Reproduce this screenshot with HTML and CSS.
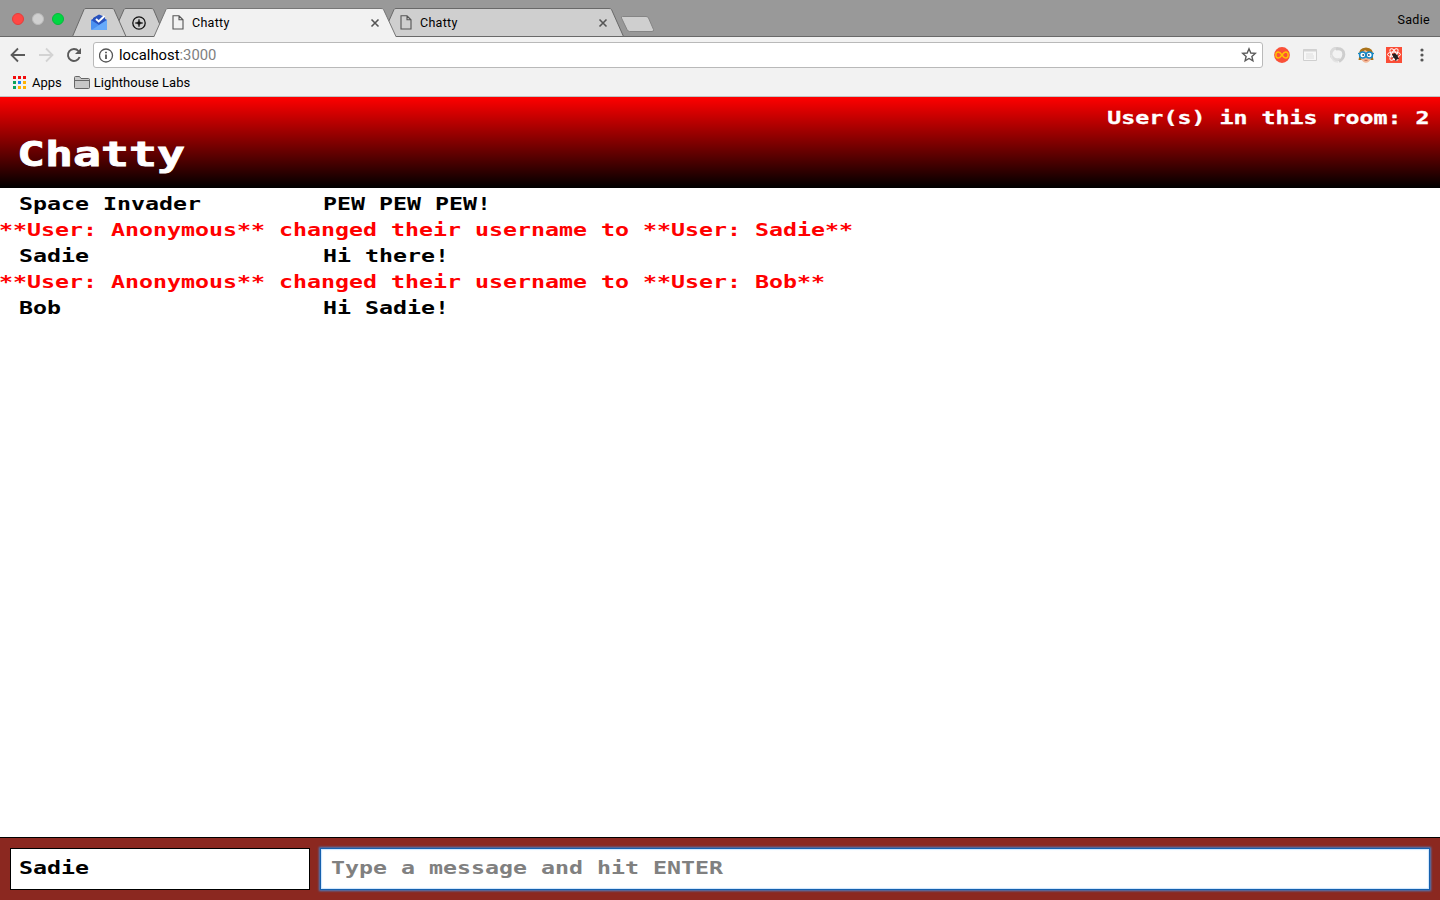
FILE: index.html
```html
<!DOCTYPE html>
<html lang="en">
<head>
<meta charset="utf-8">
<title>Chatty</title>
<link rel="stylesheet" href="styles.css">
</head>
<body>
<div class="browser">
  <div class="tabstrip">
    <svg class="tab-shapes" width="1440" height="37" viewBox="0 0 1440 37">
      <path d="M0 36.5H1440" stroke="#696969"/>
      <g fill="#cfcfcf" stroke="#696969">
        <path d="M382 36.5L394 9.5Q394.500 8.500 396 8.500H609Q611 8.500 611.500 9.500L623.500 36.500Z"/>
        <path d="M112 36.500L124 9.500Q124.500 8.500 126 8.500H151Q153 8.500 153.500 9.500L165 36.500Z"/>
        <path d="M72.500 36.500L84 9.500Q84.500 8.500 86 8.500H112Q113.500 8.500 114 9.500L126 36.500Z"/>
      </g>
      <path d="M154 37L166 9.500Q166.500 8.500 168 8.500H381Q383 8.500 383.500 9.500L396 37Z" fill="#f2f2f2"/>
      <path d="M154 36.500L166 9.500Q166.500 8.500 168 8.500H381Q383 8.500 383.500 9.500L396 36.500" fill="none" stroke="#777"/>
      <path d="M622.500 16.500H646Q648 16.500 648.500 18L653.500 29.500Q654 31.500 652 31.500H629.500Q628 31.500 627 29.500L621.500 18Q621 16.500 622.500 16.500Z" fill="#cfcfcf" stroke="#858585"/>
    </svg>
    <div class="lights"><i class="light close"></i><i class="light minimise"></i><i class="light expand"></i></div>
    <div class="tab tab-mail">
      <svg width="18" height="17" viewBox="0 0 18 17"><path d="M1 6L9 1L17 6V11H1Z" fill="#2a56c6"/><path d="M3 4L9 .500L15 3V11H3Z" fill="#2952bd"/><path d="M1 6L9 11L17 6V15Q17 16 16 16H2Q1 16 1 15Z" fill="#4b91f1"/><path d="M1.500 16L17 6V15Q17 16 16 16Z" fill="#67aafa"/><path d="M6 5L8.700 7.500L14.500 2" fill="none" stroke="#fff" stroke-width="2"/></svg>
    </div>
    <div class="tab tab-compass">
      <svg width="14" height="14" viewBox="0 0 14 14"><circle cx="7" cy="7" r="6.200" fill="none" stroke="#111" stroke-width="1.300"/><path d="M7 3L7.900 6.100L11 7L7.900 7.900L7 11L6.100 7.900L3 7L6.100 6.100Z" fill="#111" stroke="#111" stroke-width=".4"/></svg>
    </div>
    <div class="tab tab-page">
      <svg class="page" width="12" height="15" viewBox="0 0 12 15"><path d="M1 .8H7L11 4.800V14H1ZM7 .8V4.800H11" fill="none" stroke="#555" stroke-width="1.100"/></svg>
      <span>Chatty</span>
      <svg class="x" width="10" height="10" viewBox="0 0 10 10"><path d="M1.500 1.500L8.500 8.500M8.500 1.500L1.500 8.500" stroke="#555" stroke-width="1.600"/></svg>
    </div>
    <div class="tab tab-page">
      <svg class="page" width="12" height="15" viewBox="0 0 12 15"><path d="M1 .8H7L11 4.800V14H1ZM7 .8V4.800H11" fill="none" stroke="#555" stroke-width="1.100"/></svg>
      <span>Chatty</span>
      <svg class="x" width="10" height="10" viewBox="0 0 10 10"><path d="M1.500 1.500L8.500 8.500M8.500 1.500L1.500 8.500" stroke="#555" stroke-width="1.600"/></svg>
    </div>
    <span class="profile">Sadie</span>
  </div>
  <div class="toolbar">
    <svg class="nav" width="16" height="16" viewBox="0 0 16 16"><path d="M15 8H2M8 1.500L1.500 8L8 14.500" fill="none" stroke="#5a5a5a" stroke-width="1.800"/></svg>
    <svg class="nav" width="16" height="16" viewBox="0 0 16 16"><path d="M1 8H14M8 1.500L14.500 8L8 14.500" fill="none" stroke="#d3d3d3" stroke-width="1.800"/></svg>
    <svg class="nav" width="16" height="16" viewBox="0 0 16 16"><path d="M13.600 10A6 6 0 1 1 12.500 4" fill="none" stroke="#5a5a5a" stroke-width="1.900"/><path d="M15 1V7H9Z" fill="#5a5a5a"/></svg>
    <div class="omnibox">
      <svg width="15" height="15" viewBox="0 0 15 15"><circle cx="7" cy="7.500" r="6.500" fill="none" stroke="#555" stroke-width="1.300"/><path d="M7 6.500V11M7 3.700V5.300" stroke="#555" stroke-width="1.800"/></svg>
      <span class="url">localhost<span class="port">:3000</span></span>
      <svg class="star" width="16" height="16" viewBox="0 0 16 16"><path d="M8 1.800L9.800 6L14.300 6.400L10.900 9.400L11.900 13.800L8 11.500L4.100 13.800L5.100 9.400L1.700 6.400L6.200 6Z" fill="none" stroke="#5a5a5a" stroke-width="1.400"/></svg>
    </div>
    <div class="extensions">
      <svg width="16" height="16" viewBox="0 0 16 16"><circle cx="8" cy="8" r="7.900" fill="#fa5038"/><path d="M8 8C6.500 5.800 5.500 5 4.300 5C1 5 1 11 4.300 11C5.500 11 6.500 10.200 8 8C9.500 5.800 10.500 5 11.700 5C15 5 15 11 11.700 11C10.500 11 9.500 10.200 8 8Z" fill="none" stroke="#ffc400" stroke-width="1.400"/></svg>
      <svg width="16" height="16" viewBox="0 0 16 16"><path d="M1.500 2.500H14.500V13.500H1.500Z" fill="#f7f7f7" stroke="#cfcfcf"/><path d="M1.500 3.500H14.500" stroke="#d3d3d3" stroke-width="2"/><path d="M4 7H11M4 9H12M4 11H12" stroke="#dedede"/></svg>
      <svg width="16" height="16" viewBox="0 0 16 16"><path d="M8 1.500A5.500 5.500 0 0 0 3 11Q6 14 10 12" fill="none" stroke="#dadada" stroke-width="3"/><path d="M1 8Q2 15 8 15" fill="none" stroke="#e3e3e3" stroke-width="1.500"/><path d="M6 2Q14 1 13.800 7.500Q13.500 12 9 14.500" fill="none" stroke="#cecece" stroke-width="3"/></svg>
      <svg width="16" height="16" viewBox="0 0 16 16"><path d="M1.500 8Q0 1 8 .500Q16 1 14.500 8L15.500 13H.5Z" fill="#aa731a"/><path d="M3 7Q5 4 7 3Q10 5 13 6V12Q11 15.700 8 15.700Q5 15.700 3 12Z" fill="#f4b795"/><path d="M0 6.500H16" stroke="#1c87ba" stroke-width="1.300"/><g fill="#fff" stroke="#1589c9" stroke-width="1.500"><circle cx="4.700" cy="8" r="3.100"/><circle cx="11.300" cy="8" r="3.100"/></g><circle cx="5.200" cy="8" r="1" fill="#357"/><circle cx="10.800" cy="8" r="1" fill="#357"/><path d="M6.500 13.300H9.500" stroke="#bd6045"/></svg>
      <svg width="16" height="16" viewBox="0 0 16 16"><path d="M0 0H16V16H0Z" fill="#fb4d36"/><g fill="none" stroke="#fff" stroke-width="1"><ellipse cx="8" cy="7.500" rx="6.500" ry="2.500"/><ellipse cx="8" cy="7.500" rx="6.500" ry="2.500" transform="rotate(60 8 7.500)"/><ellipse cx="8" cy="7.500" rx="6.500" ry="2.500" transform="rotate(120 8 7.500)"/></g><ellipse cx="9.500" cy="9.500" rx="2" ry="3.500" fill="#252020" transform="rotate(-35 9.500 9.500)"/><path d="M6 7L13 12M6.500 10.500L12 8M10 14L8 7" stroke="#252020"/></svg>
      <svg width="16" height="16" viewBox="0 0 16 16"><g fill="#555"><circle cx="8" cy="3" r="1.600"/><circle cx="8" cy="8" r="1.600"/><circle cx="8" cy="13" r="1.600"/></g></svg>
    </div>
  </div>
  <div class="bookmarks">
    <svg class="grid" width="13" height="13" viewBox="0 0 13 13"><path d="M0 0H3V3H0ZM5 0H8V3H5ZM10 0H13V3H10Z" fill="#f20d0d"/><path d="M0 5H3V8H0ZM0 10H3V13H0Z" fill="#0ba35c"/><path d="M5 5H8V8H5Z" fill="#1684f5"/><path d="M10 5H13V8H10ZM5 10H8V13H5ZM10 10H13V13H10Z" fill="#ffb300"/></svg>
    <span class="apps">Apps</span>
    <svg class="grid" width="16" height="13" viewBox="0 0 16 13"><path d="M.5 11.500V1.500Q.5.500 1.500.500H5.500L7 2.500H14.500Q15.500 2.500 15.500 3.500V11.500Q15.500 12.500 14.500 12.500H1.500Q.5 12.500.5 11.500ZM.5 4.500H15.500" fill="#c8c8c8" stroke="#666"/></svg>
    <span class="folder">Lighthouse Labs</span>
  </div>
</div>
<header class="header">
  <h1 class="brand"><span class="pixel">Chatty</span></h1>
  <div class="count"><span class="pixel from-right">User(s) in this room: 2</span></div>
</header>
<main class="messages">
  <div class="message"><div class="author"><span class="pixel">Space Invader</span></div><div><span class="pixel">PEW PEW PEW!</span></div></div>
  <div class="notice"><span class="pixel">**User: Anonymous** changed their username to **User: Sadie**</span></div>
  <div class="message"><div class="author"><span class="pixel">Sadie</span></div><div><span class="pixel">Hi there!</span></div></div>
  <div class="notice"><span class="pixel">**User: Anonymous** changed their username to **User: Bob**</span></div>
  <div class="message"><div class="author"><span class="pixel">Bob</span></div><div><span class="pixel">Hi Sadie!</span></div></div>
</main>
<footer class="chatbar">
  <div class="field username"><span class="pixel">Sadie</span></div>
  <div class="field entry"><span class="pixel">Type a message and hit ENTER</span></div>
</footer>
</body>
</html>
```
FILE: styles.css
```css
* { box-sizing: border-box; }
body {
  margin: 0;
  width: 1440px;
  height: 900px;
  overflow: hidden;
  display: flex;
  flex-direction: column;
  background: #fff;
  font-family: "DejaVu Sans Mono", monospace;
  font-weight: bold;
  font-size: 17px;
  line-height: 26px;
}
svg { display: block; flex: none; }

.browser {
  height: 97px;
  flex: none;
  background: #f2f2f2;
  border-bottom: 1px solid #c3c3c3;
  font: 13px/18px Roboto, sans-serif;
  color: #000;
}
.tabstrip {
  position: relative;
  display: flex;
  height: 37px;
  background: #999;
  font-size: 12.5px;
  letter-spacing: 0.3px;
}
.tab-shapes { position: absolute; left: 0; top: 0; }
.lights { display: flex; gap: 8px; padding: 13px 0 0 12px; width: 90px; }
.light { width: 12px; height: 12px; border-radius: 50%; }
.close { background: #ff4744; border: 1px solid #e33e3b; }
.minimise { background: #d0d0d0; border: 1px solid #bcbcbc; }
.expand { background: #00d742; border: 1px solid #06b93b; }
.tab { position: relative; display: flex; }
.tab-mail { width: 42px; padding-top: 14px; }
.tab-compass { width: 40px; padding-top: 16px; }
.tab-page { width: 228px; padding: 15px 20px 0 0; }
.tab-page span { margin: -1px 0 0 8px; }
.tab-page .x { margin: 3px 0 0 auto; }
.profile { position: relative; margin: 11px 10px 0 auto; }

.toolbar { display: flex; align-items: center; height: 36px; padding: 0 10px; }
.nav { margin-right: 12px; }
.omnibox {
  display: flex;
  align-items: center;
  width: 1170px;
  height: 26px;
  margin-left: -1px;
  padding: 0 5px;
  background: #fff;
  border: 1px solid #b9b9b9;
  border-radius: 3px;
}
.url { margin-left: 5px; font-size: 14.8px; }
.port { color: #808080; }
.star { margin-left: auto; }
.extensions { display: flex; gap: 12px; margin-left: 11px; }
.bookmarks { display: flex; align-items: center; height: 20px; padding-left: 13px; }
.grid { margin-top: -1px; }
.apps { margin: 0 12px 0 6px; }
.folder { margin-left: 4px; letter-spacing: 0.07px; }

/* Wide block lettering: each character advances 14px. */
.pixel {
  display: inline-block;
  white-space: pre;
  transform: scaleX(1.368);
  transform-origin: left;
}
.from-right { transform-origin: right; }
.header {
  display: flex;
  justify-content: space-between;
  height: 91px;
  flex: none;
  color: #fff;
  background: linear-gradient(#f00, #000);
}
.brand {
  margin: 37px 0 0 17px;
  font-size: 34px;
  line-height: 40px;
  -webkit-text-stroke: 0.8px #fff;
}
.count {
  padding: 8px 11px 0 0;
  line-height: 27px;
  -webkit-text-stroke: 0.3px #fff;
}
.messages { flex: 1; padding-top: 3px; }
.message { display: flex; padding-left: 19px; }
.author { width: 304px; }
.notice { margin-left: -1px; color: #f00; }
.chatbar {
  display: flex;
  gap: 10px;
  height: 63px;
  padding: 10px;
  background: #8b2820;
  border-top: 1px solid #000;
}
.field {
  height: 42px;
  padding: 6px 8px;
  background: #fff;
  border: 1px solid #000;
}
.username { width: 300px; }
.entry {
  flex: 1;
  padding-left: 10px;
  color: #808080;
  border-color: #1660ad;
  box-shadow: 0 0 2px 1px #4480c8, inset 0 0 1px 1px #cce6ff;
}
```
